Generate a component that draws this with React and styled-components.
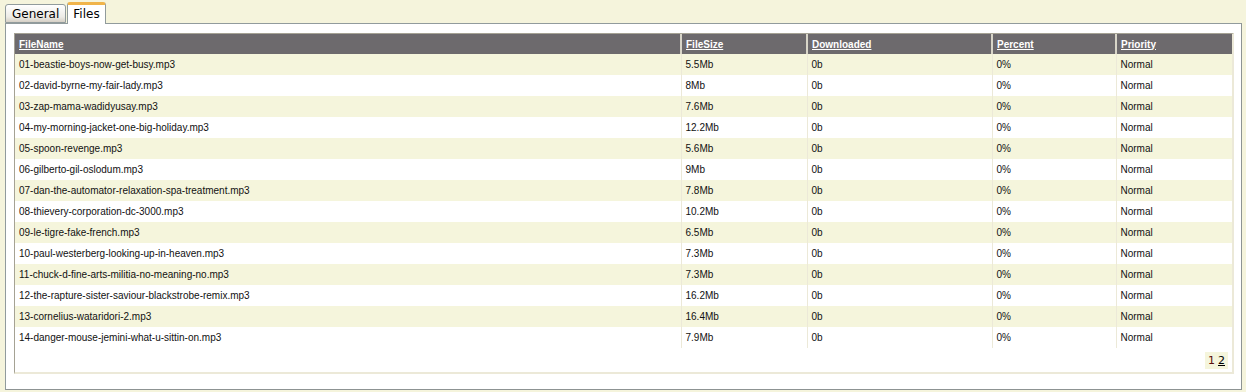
import styled, { createGlobalStyle } from 'styled-components';

const GlobalStyle = createGlobalStyle`
  html, body {
    margin: 0;
    padding: 0;
    background: #f5f4dc;
  }
  body {
    font-family: Tahoma, "DejaVu Sans", "Liberation Sans", sans-serif;
  }
`;

const Page = styled.div`
  width: 1246px;
  height: 392px;
  padding: 2px 4px 0 5px;
  box-sizing: border-box;
  background: #f5f4dc;
`;

const TabBar = styled.div`
  display: flex;
  align-items: flex-end;
  height: 21px;
  position: relative;
  z-index: 1;
`;

const Tab = styled.div`
  box-sizing: border-box;
  height: ${p => (p.$active ? '22px' : '19px')};
  margin-bottom: ${p => (p.$active ? '-1px' : '0')};
  padding: 0 ${p => (p.$active ? '5px' : '6px')};
  margin-right: 1px;
  font-family: "DejaVu Sans", sans-serif;
  font-size: 12px;
  line-height: ${p => (p.$active ? '19px' : '18px')};
  color: #000;
  border: 1px solid #919b9c;
  border-bottom: ${p => (p.$active ? 'none' : '1px solid #919b9c')};
  border-top: ${p => (p.$active ? '3px solid #f0b44a' : '1px solid #919b9c')};
  border-radius: 3px 3px 0 0;
  background: ${p => (p.$active ? '#fff' : 'linear-gradient(#ffffff, #ecebe6 70%, #d6d0c5)')};
`;

const Panel = styled.div`
  box-sizing: border-box;
  height: 367px;
  background: #fff;
  border: 1px solid #919b9c;
  border-right-color: #8d9393;
  border-bottom-color: #8d9393;
  padding: 9px 7px 0 8px;
`;

const Grid = styled.div`
  box-sizing: border-box;
  height: 341px;
  border-left: 1px solid #a5a294;
  border-top: 1px solid #a5a294;
  border-right: 2px solid #ece9d8;
  border-bottom: 2px solid #ece9d8;
  display: flex;
  flex-direction: column;
`;

const Table = styled.table`
  width: 100%;
  border-collapse: collapse;
  table-layout: fixed;
  font-family: "Liberation Sans", Arial, sans-serif;
  font-size: 10px;
`;

const Th = styled.th`
  box-sizing: border-box;
  background: #6d6a6d;
  color: #fff;
  text-align: left;
  font-weight: bold;
  text-decoration: underline;
  height: 20px;
  padding: 0 4px;
  border-left: 2px solid #d8d5c8;
  width: ${p => p.$w || 'auto'};
  &:first-child {
    border-left: none;
  }
`;

const Tr = styled.tr`
  background: ${p => (p.$alt ? '#f5f5dc' : '#fff')};
`;

const Td = styled.td`
  height: 21px;
  padding: 0 4px;
  color: #111;
  white-space: nowrap;
  border-left: 1px solid #ece9d8;
  &:first-child {
    border-left: none;
  }
`;

const Pager = styled.div`
  display: flex;
  justify-content: flex-end;
  padding: 4px 4px 0 0;
`;

const PageBox = styled.div`
  background: #f5f5dc;
  padding: 2px 3px;
  font-family: "DejaVu Sans", sans-serif;
  font-size: 11px;
  color: #5a0e0e;
  a {
    color: #000;
    margin-left: 3px;
  }
`;

const files = [
  ['01-beastie-boys-now-get-busy.mp3', '5.5Mb'],
  ['02-david-byrne-my-fair-lady.mp3', '8Mb'],
  ['03-zap-mama-wadidyusay.mp3', '7.6Mb'],
  ['04-my-morning-jacket-one-big-holiday.mp3', '12.2Mb'],
  ['05-spoon-revenge.mp3', '5.6Mb'],
  ['06-gilberto-gil-oslodum.mp3', '9Mb'],
  ['07-dan-the-automator-relaxation-spa-treatment.mp3', '7.8Mb'],
  ['08-thievery-corporation-dc-3000.mp3', '10.2Mb'],
  ['09-le-tigre-fake-french.mp3', '6.5Mb'],
  ['10-paul-westerberg-looking-up-in-heaven.mp3', '7.3Mb'],
  ['11-chuck-d-fine-arts-militia-no-meaning-no.mp3', '7.3Mb'],
  ['12-the-rapture-sister-saviour-blackstrobe-remix.mp3', '16.2Mb'],
  ['13-cornelius-wataridori-2.mp3', '16.4Mb'],
  ['14-danger-mouse-jemini-what-u-sittin-on.mp3', '7.9Mb'],
];

function App() {
  return (
    <Page>
      <GlobalStyle />
      <TabBar>
        <Tab>General</Tab>
        <Tab $active>Files</Tab>
      </TabBar>
      <Panel>
        <Grid>
          <Table>
            <thead>
              <tr>
                <Th $w="666px">FileName</Th>
                <Th $w="126px">FileSize</Th>
                <Th $w="185px">Downloaded</Th>
                <Th $w="124px">Percent</Th>
                <Th>Priority</Th>
              </tr>
            </thead>
            <tbody>
              {files.map((f, i) => (
                <Tr key={`file-${i}`} $alt={i % 2 === 0}>
                  <Td>{f[0]}</Td>
                  <Td>{f[1]}</Td>
                  <Td>0b</Td>
                  <Td>0%</Td>
                  <Td>Normal</Td>
                </Tr>
              ))}
            </tbody>
          </Table>
          <Pager>
            <PageBox>
              1<a href="#2">2</a>
            </PageBox>
          </Pager>
        </Grid>
      </Panel>
    </Page>
  );
}

export default App;
